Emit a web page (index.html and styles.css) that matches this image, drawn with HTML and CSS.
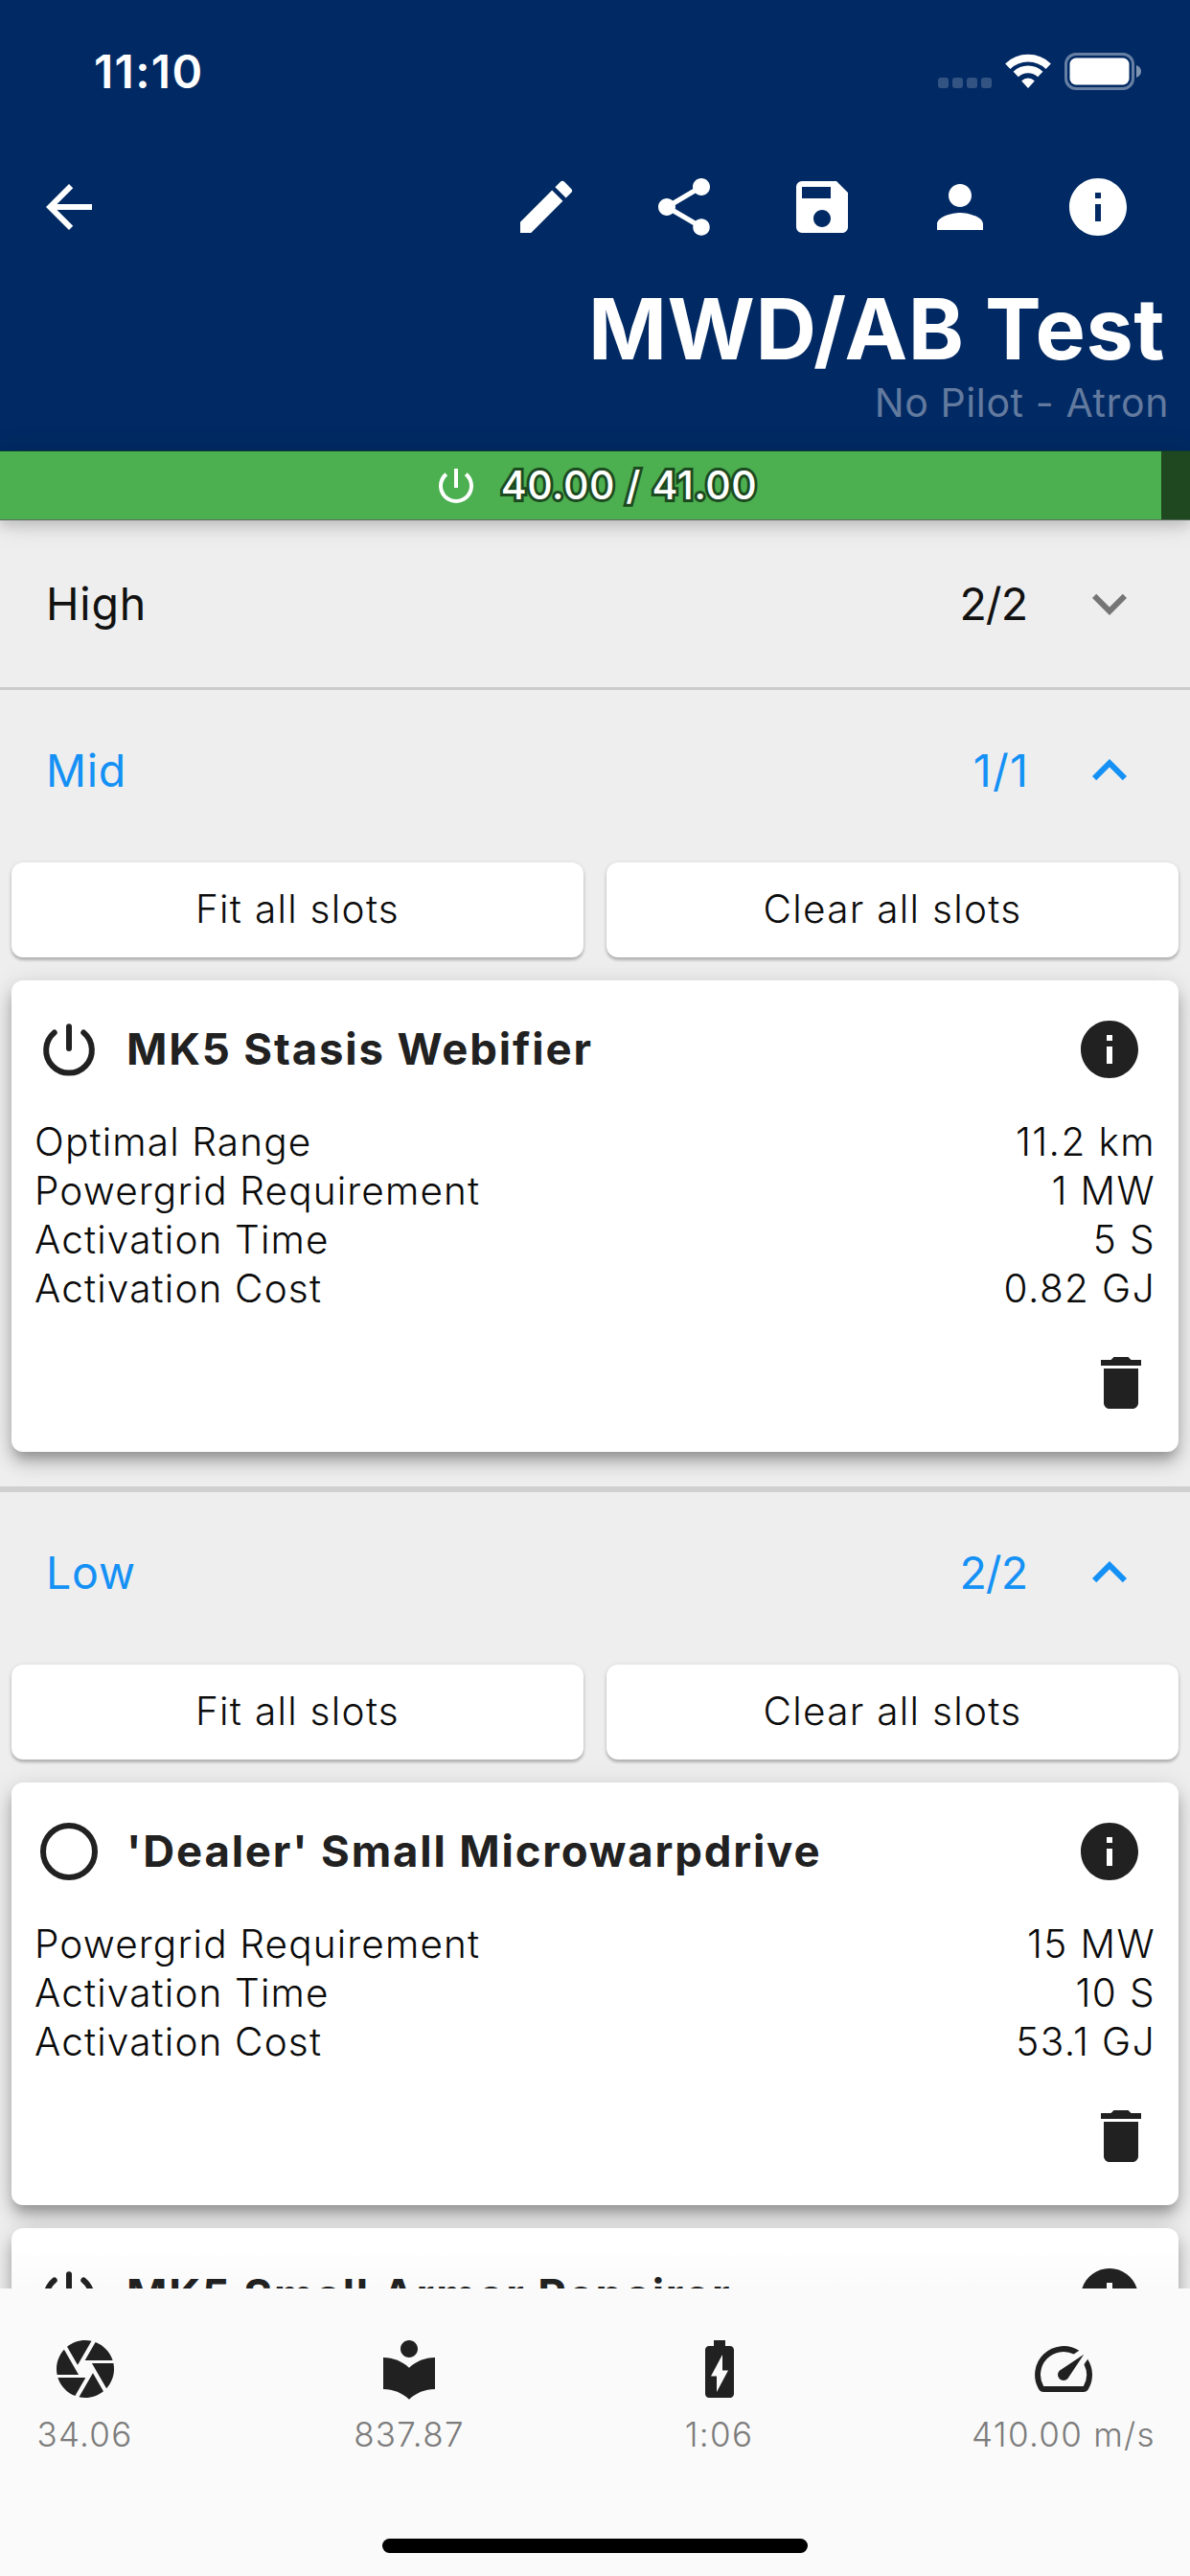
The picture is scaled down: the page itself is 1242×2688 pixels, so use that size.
FILE: index.html
```html
<!DOCTYPE html>
<html lang="en">
<head>
<meta charset="utf-8">
<meta name="viewport" content="width=device-width">
<title>MWD/AB Test</title>
<link rel="stylesheet" href="styles.css">
</head>
<body>
<svg class="sprite" aria-hidden="true">
  <symbol id="info" viewBox="0 0 24 24"><path d="M12 2C6.48 2 2 6.48 2 12s4.48 10 10 10 10-4.48 10-10S17.52 2 12 2zm1 15h-2v-6h2v6zm0-8h-2V7h2v2z"/></symbol>
  <symbol id="power" viewBox="0 0 24 24"><path d="M13 3h-2v10h2V3zm4.83 2.17l-1.42 1.42A6.92 6.92 0 0 1 19 12c0 3.87-3.13 7-7 7A6.995 6.995 0 0 1 7.58 6.58L6.17 5.17A8.932 8.932 0 0 0 3 12a9 9 0 0 0 18 0c0-2.74-1.23-5.18-3.17-6.83z"/></symbol>
  <symbol id="power-round" viewBox="0 0 24 24"><path d="M12 4.05v7.6M6.9 6.15A7.95 7.95 0 1 0 17.1 6.15" fill="none" stroke="currentColor" stroke-width="2" stroke-linecap="round"/></symbol>
  <symbol id="circle" viewBox="0 0 24 24"><circle cx="12" cy="12" r="9" fill="none" stroke="currentColor" stroke-width="2"/></symbol>
  <symbol id="trash" viewBox="0 0 24 24"><path d="M6 19c0 1.1.9 2 2 2h8c1.1 0 2-.9 2-2V7H6v12zM19 4h-3.5l-1-1h-5l-1 1H5v2h14V4z"/></symbol>
  <symbol id="more" viewBox="0 0 24 24"><path d="M16.59 8.59L12 13.17 7.41 8.59 6 10l6 6 6-6z"/></symbol>
  <symbol id="less" viewBox="0 0 24 24"><path d="M12 8l-6 6 1.41 1.41L12 10.83l4.59 4.58L18 14z"/></symbol>
</svg>

<div class="screen">
  <header class="header">
    <div class="status">
      <span class="clock">11:10</span>
      <div class="status-icons">
        <div class="dots"><i></i><i></i><i></i><i></i></div>
        <svg class="wifi" viewBox="0 0 48 36"><g fill="none" stroke="currentColor" stroke-width="7.6"><path d="M2.8 13.2A30.5 30.5 0 0 1 45.2 13.2"/><path d="M11.2 21.6A18.4 18.4 0 0 1 36.8 21.6"/></g><path d="M17.2 28.4A9.7 9.7 0 0 1 30.8 28.4L24 36z"/></svg>
        <svg class="battery" viewBox="0 0 81 39"><rect x="1.5" y="1.5" width="70" height="36" rx="10.5" fill="none" stroke="currentColor" stroke-width="3" opacity=".4"/><rect x="5.5" y="5.5" width="62" height="28" rx="6.5"/><path d="M75 13c3.4 1.4 5 3.800 5 6.500s-1.600 5.100-5 6.500z" opacity=".5"/></svg>
      </div>
    </div>
    <nav class="toolbar">
      <a class="tool"><svg class="icon" viewBox="0 0 24 24"><path d="M20 11H7.830l5.590-5.590L12 4l-8 8 8 8 1.410-1.410L7.830 13H20v-2z"/></svg></a>
      <div class="tools">
        <a class="tool"><svg class="icon" viewBox="0 0 24 24"><path d="M3 17.250V21h3.750L17.810 9.940l-3.750-3.750L3 17.250zM20.710 7.040a.996.996 0 0 0 0-1.410l-2.340-2.340a.996.996 0 0 0-1.410 0l-1.830 1.830 3.750 3.750 1.830-1.830z"/></svg></a>
        <a class="tool"><svg class="icon" viewBox="0 0 24 24"><path d="M18 16.080c-.76 0-1.440.3-1.960.77L8.910 12.700c.05-.23.09-.46.09-.7s-.04-.47-.09-.7l7.050-4.110c.54.5 1.250.81 2.040.81 1.660 0 3-1.340 3-3s-1.340-3-3-3-3 1.340-3 3c0 .24.04.47.09.7L8.040 9.810C7.500 9.310 6.790 9 6 9c-1.660 0-3 1.340-3 3s1.340 3 3 3c.79 0 1.500-.31 2.040-.81l7.120 4.160c-.05.21-.08.43-.08.65 0 1.610 1.310 2.920 2.920 2.920s2.920-1.310 2.920-2.920-1.310-2.920-2.920-2.920z"/></svg></a>
        <a class="tool"><svg class="icon" viewBox="0 0 24 24"><path d="M17 3H5a2 2 0 0 0-2 2v14a2 2 0 0 0 2 2h14c1.100 0 2-.9 2-2V7l-4-4zm-5 16c-1.660 0-3-1.340-3-3s1.340-3 3-3 3 1.340 3 3-1.340 3-3 3zm3-10H5V5h10v4z"/></svg></a>
        <a class="tool"><svg class="icon" viewBox="0 0 24 24"><path d="M12 12c2.210 0 4-1.790 4-4s-1.790-4-4-4-4 1.790-4 4 1.790 4 4 4zm0 2c-2.670 0-8 1.340-8 4v2h16v-2c0-2.660-5.330-4-8-4z"/></svg></a>
        <a class="tool"><svg class="icon"><use href="#info"/></svg></a>
      </div>
    </nav>
    <h1 class="title">MWD/AB Test</h1>
    <p class="subtitle">No Pilot - Atron</p>
  </header>

  <div class="powergrid">
    <div class="powergrid-fill" style="width:97.6%"></div>
    <div class="powergrid-label"><svg class="icon-small"><use href="#power"/></svg><span>40.00 / 41.00</span></div>
  </div>

  <main class="list">
    <section class="section">
      <div class="section-head"><span>High</span><span class="count">2/2</span><svg class="icon chevron"><use href="#more"/></svg></div>
    </section>

    <section class="section open">
      <div class="section-head"><span>Mid</span><span class="count count-ones">1/1</span><svg class="icon"><use href="#less"/></svg></div>
      <div class="actions"><button class="action">Fit all slots</button><button class="action">Clear all slots</button></div>
      <article class="card">
        <div class="card-head"><svg class="icon"><use href="#power-round"/></svg><h2>MK5 Stasis Webifier</h2><svg class="icon"><use href="#info"/></svg></div>
        <dl class="stats">
          <div><dt>Optimal Range</dt><dd>11.2 km</dd></div>
          <div><dt>Powergrid Requirement</dt><dd>1 MW</dd></div>
          <div><dt>Activation Time</dt><dd>5 S</dd></div>
          <div><dt>Activation Cost</dt><dd>0.82 GJ</dd></div>
        </dl>
        <div class="card-foot"><svg class="icon"><use href="#trash"/></svg></div>
      </article>
    </section>

    <section class="section open">
      <div class="section-head"><span>Low</span><span class="count">2/2</span><svg class="icon"><use href="#less"/></svg></div>
      <div class="actions"><button class="action">Fit all slots</button><button class="action">Clear all slots</button></div>
      <article class="card">
        <div class="card-head"><svg class="icon"><use href="#circle"/></svg><h2>'Dealer' Small Microwarpdrive</h2><svg class="icon"><use href="#info"/></svg></div>
        <dl class="stats">
          <div><dt>Powergrid Requirement</dt><dd>15 MW</dd></div>
          <div><dt>Activation Time</dt><dd>10 S</dd></div>
          <div><dt>Activation Cost</dt><dd>53.1 GJ</dd></div>
        </dl>
        <div class="card-foot"><svg class="icon"><use href="#trash"/></svg></div>
      </article>
      <article class="card fading">
        <div class="card-head"><svg class="icon"><use href="#power-round"/></svg><h2>MK5 Small Armor Repairer</h2><svg class="icon"><use href="#info"/></svg></div>
      </article>
    </section>
  </main>

  <footer class="bottom">
    <div class="summary">
      <div class="metric metric-a"><svg class="icon" viewBox="0 0 24 24"><path d="M9.400 10.500l4.770-8.260C13.470 2.090 12.750 2 12 2c-2.400 0-4.600.85-6.320 2.250l3.660 6.350.06-.1zM21.540 9c-.92-2.920-3.150-5.260-6-6.340L11.880 9h9.660zm.26 1h-7.490l.29.5 4.760 8.250C21 16.970 22 14.610 22 12c0-.69-.07-1.350-.2-2zM8.540 12l-3.900-6.750C3.010 7.030 2 9.390 2 12c0 .69.07 1.350.2 2h7.490l-1.150-2zm-6.080 3c.92 2.920 3.150 5.260 6 6.340L12.120 15H2.460zm11.270 0l-3.900 6.760c.7.15 1.420.24 2.170.24 2.400 0 4.600-.85 6.320-2.250l-3.660-6.350-.93 1.600z"/></svg><span>34.06</span></div>
      <div class="metric metric-b"><svg class="icon" viewBox="0 0 24 24"><path d="M12 11.550C9.640 9.350 6.480 8 3 8v11c3.480 0 6.640 1.350 9 3.550 2.360-2.190 5.520-3.550 9-3.550V8c-3.480 0-6.640 1.350-9 3.550zM12 8c1.660 0 3-1.340 3-3s-1.340-3-3-3-3 1.340-3 3 1.340 3 3 3z"/></svg><span>837.87</span></div>
      <div class="metric metric-c"><svg class="icon" viewBox="0 0 24 24"><path d="M15.670 4H14V2h-4v2H8.330C7.600 4 7 4.600 7 5.330v15.330C7 21.400 7.600 22 8.330 22h7.330c.74 0 1.340-.6 1.340-1.330V5.330C17 4.600 16.400 4 15.670 4zM11 20v-5.500H9L13 7v5.500h2L11 20z"/></svg><span>1:06</span></div>
      <div class="metric metric-d"><svg class="icon" viewBox="0 0 24 24"><path d="M20.380 8.570l-1.230 1.850a8 8 0 0 1-.22 7.580H5.070A8 8 0 0 1 15.580 6.850l1.850-1.230A10 10 0 0 0 3.350 19a2 2 0 0 0 1.720 1h13.850a2 2 0 0 0 1.740-1 10 10 0 0 0-.27-10.440z"/><path d="M10.590 15.410a2 2 0 0 0 2.830 0l5.660-8.490-8.490 5.660a2 2 0 0 0 0 2.830z"/></svg><span>410.00 m/s</span></div>
    </div>
    <div class="home-indicator"></div>
  </footer>
</div>
</body>
</html>
```
FILE: styles.css
```css
* { box-sizing: border-box; margin: 0; padding: 0; }

body {
  background: #eee;
  color: #212121;
  font-family: Inter, "Liberation Sans", sans-serif;
}

svg { display: block; fill: currentColor; flex: none; }
.sprite { display: none; }
.icon { width: 72px; height: 72px; }
.icon-small { width: 48px; height: 48px; }

.screen {
  display: flex;
  flex-direction: column;
  width: 1242px;
  height: 2688px;
  overflow: hidden;
}

/* Header */
.header {
  flex: none;
  height: 470px;
  background: #012a64;
  color: #fff;
}

.status {
  display: flex;
  justify-content: space-between;
  height: 132px;
  padding: 55px 50px 0 98px;
}
.clock { font-size: 48px; font-weight: 600; line-height: 39px; letter-spacing: 1.3px; }
.status-icons { display: flex; }
.dots { display: flex; gap: 4px; margin: 26px 14px 0 0; }
.dots i { width: 11px; height: 11px; border-radius: 3px; background: rgba(255, 255, 255, .2); }
.wifi { width: 48px; height: 36px; margin: 1px 14px 0 0; }
.battery { width: 81px; height: 39px; }

.toolbar { display: flex; justify-content: space-between; height: 168px; padding-right: 24px; }
.tools { display: flex; }
.tool { display: grid; place-items: center; width: 144px; height: 168px; }

.title {
  padding-right: 26px;
  font-size: 88px;
  font-weight: 700;
  line-height: 86px;
  letter-spacing: .55px;
  text-align: right;
}
.subtitle {
  padding-right: 22px;
  color: #637a9f;
  font-size: 41px;
  line-height: 69px;
  letter-spacing: .62px;
  text-align: right;
}

/* Powergrid usage bar */
.powergrid {
  position: relative;
  z-index: 2;
  flex: none;
  display: grid;
  height: 73px;
  background: #1f4720;
  border-top: 1px solid #0b3b33;
  border-bottom: 1px solid #5c6b5d;
  box-shadow: 0 6px 12px rgba(0, 0, 0, .13), 0 3px 30px rgba(0, 0, 0, .13);
}
.powergrid > * { grid-area: 1 / 1; }
.powergrid-fill { background: #4caf50; }
.powergrid-label {
  display: flex;
  align-items: center;
  justify-content: center;
  gap: 23px;
  color: #fff;
  font-size: 41px;
  font-weight: 500;
  line-height: 71px;
  letter-spacing: .52px;
}
.powergrid-label span { -webkit-text-stroke: 6px #1c4a1f; paint-order: stroke fill; }

/* Slot sections */
.list { flex: 1; min-height: 0; overflow: hidden; }
.section { border-bottom: 3px solid #cbcbcb; }
.section.open { border-bottom: 6px solid #d0d0d0; }
.section-head {
  display: flex;
  align-items: center;
  height: 168px;
  padding: 0 48px;
  color: #111;
  font-size: 46.5px;
  letter-spacing: .8px;
}
.section:first-child .section-head { height: 174px; }
.section.open .section-head { color: #1591f5; }
.count { margin: 0 50px 0 auto; letter-spacing: -1px; }
.count-ones { margin-right: 48px; letter-spacing: 1.2px; }
.chevron { color: #757575; }

.actions { display: grid; grid-template-columns: 1fr 1fr; gap: 24px; padding: 12px 12px 24px; }
.action {
  height: 99px;
  padding-bottom: 3px;
  border: 0;
  border-radius: 12px;
  background: #fff;
  box-shadow: 0 3px 3px rgba(0, 0, 0, .2), 0 1px 5px rgba(0, 0, 0, .12);
  color: #0c0c0c;
  font: 350 40.5px/95px Inter, "Liberation Sans", sans-serif;
  letter-spacing: 1.3px;
}

.card {
  margin: 0 12px 24px;
  border-radius: 12px;
  background: #fff;
  box-shadow: 0 9px 12px -3px rgba(0, 0, 0, .22), 0 12px 20px rgba(0, 0, 0, .17), 0 3px 28px rgba(0, 0, 0, .1);
}
.section.open .card:nth-last-child(1) { margin-bottom: 36px; }
.card-head {
  display: flex;
  align-items: center;
  gap: 24px;
  height: 144px;
  padding: 0 36px 0 24px;
}
.card-head h2 {
  flex: 1;
  padding-bottom: 2px;
  font-size: 45.5px;
  font-weight: 700;
  letter-spacing: 1.85px;
  white-space: nowrap;
}
.stats { padding: 0 24px; color: #0a0a0a; font-size: 40.5px; font-weight: 350; line-height: 49px; letter-spacing: 1.15px; }
.stats div { display: flex; justify-content: space-between; height: 51px; }
.stats dd { letter-spacing: 1.4px; }
.card-foot { display: flex; align-items: center; justify-content: flex-end; height: 144px; padding-right: 24px; }
.fading { background: linear-gradient(#fff 20px, #fafafa 63px); }
.fading h2 { padding-bottom: 6px; }

/* Bottom summary */
.bottom {
  z-index: 1;
  flex: none;
  display: flex;
  flex-direction: column;
  justify-content: space-between;
  height: 300px;
  padding-bottom: 24px;
  background: #fafafa;
}
.summary { display: flex; justify-content: space-between; padding: 48px 36px 0; }
.metric { display: flex; flex-direction: column; align-items: center; color: #212121; }
.metric span { color: #7c7c7c; font-size: 35px; font-weight: 350; line-height: 65px; letter-spacing: 1.3px; white-space: nowrap; }
.metric-a { width: 105px; }
.metric-b { width: 120px; }
.metric-c { width: 75px; }
.metric-d { width: 192px; }
.home-indicator { align-self: center; width: 444px; height: 15px; border-radius: 8px; background: #000; }
```
